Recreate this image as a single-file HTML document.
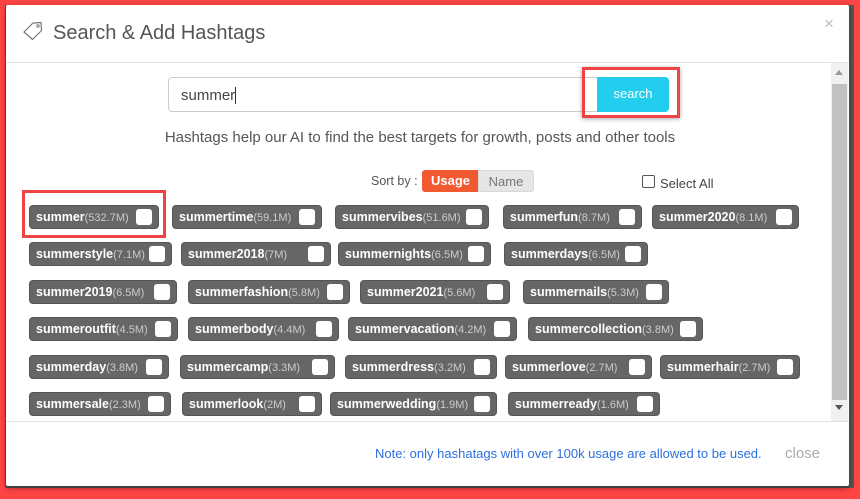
<!DOCTYPE html>
<html><head><meta charset="utf-8"><style>
*{box-sizing:border-box;margin:0;padding:0}
body{width:860px;height:499px;background:#f44;position:relative;overflow:hidden;font-family:"Liberation Sans",Arial,sans-serif}
.dark{position:absolute;left:5px;top:5px;width:849px;height:483px;background:#555}
.modal{position:absolute;left:6px;top:5px;width:843px;height:481px;background:#fff;border-radius:2px;box-shadow:0 2px 6px rgba(0,0,0,.4)}
.title{position:absolute;left:53px;top:22px;font-size:20px;color:#555}
.x{position:absolute;left:824px;top:14px;font-size:17px;color:#bbb}
.hr{position:absolute;left:6px;width:843px;height:1px;background:#e2e2e2}
.input{position:absolute;left:168px;top:77px;width:430px;height:35px;border:1px solid #ccc;border-radius:4px 0 0 4px;font-size:15px;color:#444;padding:9px 12px}
.input span{border-right:1px solid #333}
.btn{position:absolute;left:597px;top:77px;width:72px;height:35px;background:#22cdee;color:#fff;font-size:13px;text-align:center;line-height:34px;border-radius:0 4px 4px 0}
.hl{position:absolute;border:3px solid #ee4444;box-shadow:0 1px 4px rgba(0,0,0,.35)}
.hint{position:absolute;left:0;width:840px;top:129px;text-align:center;font-size:15px;color:#555}
.sort{position:absolute;left:371px;top:174px;font-size:12.5px;color:#555}
.usage{position:absolute;left:422px;top:170px;width:57px;height:22px;background:#f15a30;color:#fff;font-weight:bold;font-size:13px;text-align:center;line-height:22px;border-radius:3px 0 0 3px}
.name{position:absolute;left:478px;top:170px;width:56px;height:22px;background:#e6e6e6;color:#777;font-size:13px;text-align:center;line-height:22px;border:1px solid #d8d8d8;border-radius:0 3px 3px 0}
.sa{position:absolute;left:642px;top:175px;width:13px;height:13px;border:1px solid #555;border-radius:2px}
.sat{position:absolute;left:660px;top:176px;font-size:13px;color:#444}
.chip{position:absolute;height:24px;background:#666;border:1px solid #555;border-radius:4px;color:#fff;font-weight:bold;font-size:12.5px;line-height:22px;padding-left:6px;white-space:nowrap}
.chip i{font-style:normal;font-weight:normal;color:#ccc;font-size:11px}
.chip b{position:absolute;right:6px;top:3px;width:16px;height:16px;background:#fff;border-radius:3px}
.sb{position:absolute;left:831px;top:63px;width:17px;height:358px;background:#f1f1f1}
.thumb{position:absolute;left:832px;top:84px;width:15px;height:316px;background:#c1c1c1}
.note{position:absolute;left:375px;top:446px;font-size:13px;color:#2c6fe0}
.close{position:absolute;left:785px;top:445px;font-size:15px;color:#aaa}
</style></head><body>
<div class="dark"></div>
<div class="modal"></div>
<svg style="position:absolute;left:22px;top:21px" width="22" height="20" viewBox="0 0 22 20"><path d="M2 11 L11 2 L19 1.5 L19.5 9.5 L10.5 18.5 Z" fill="none" stroke="#777" stroke-width="1.2" stroke-linejoin="round"/><circle cx="16" cy="5" r="1.2" fill="none" stroke="#777" stroke-width="1"/></svg>
<div class="title">Search &amp; Add Hashtags</div>
<div class="x">×</div>
<div class="hr" style="top:62px"></div>
<div class="input"><span>summer</span></div>
<div class="btn">search</div>
<div class="hl" style="left:582px;top:67px;width:98px;height:51px"></div>
<div class="hint">Hashtags help our AI to find the best targets for growth, posts and other tools</div>
<div class="sort">Sort by :</div>
<div class="usage">Usage</div><div class="name">Name</div>
<div class="sa"></div><div class="sat">Select All</div>

<div class="chip" style="left:29px;top:205px;width:130px">summer<i>(532.7M)</i><b></b></div>
<div class="chip" style="left:172px;top:205px;width:150px">summertime<i>(59.1M)</i><b></b></div>
<div class="chip" style="left:335px;top:205px;width:154px">summervibes<i>(51.6M)</i><b></b></div>
<div class="chip" style="left:503px;top:205px;width:139px">summerfun<i>(8.7M)</i><b></b></div>
<div class="chip" style="left:652px;top:205px;width:147px">summer2020<i>(8.1M)</i><b></b></div>

<div class="chip" style="left:29px;top:242px;width:143px">summerstyle<i>(7.1M)</i><b></b></div>
<div class="chip" style="left:181px;top:242px;width:150px">summer2018<i>(7M)</i><b></b></div>
<div class="chip" style="left:338px;top:242px;width:153px">summernights<i>(6.5M)</i><b></b></div>
<div class="chip" style="left:504px;top:242px;width:144px">summerdays<i>(6.5M)</i><b></b></div>

<div class="chip" style="left:29px;top:280px;width:148px">summer2019<i>(6.5M)</i><b></b></div>
<div class="chip" style="left:188px;top:280px;width:162px">summerfashion<i>(5.8M)</i><b></b></div>
<div class="chip" style="left:360px;top:280px;width:150px">summer2021<i>(5.6M)</i><b></b></div>
<div class="chip" style="left:523px;top:280px;width:146px">summernails<i>(5.3M)</i><b></b></div>

<div class="chip" style="left:29px;top:317px;width:149px">summeroutfit<i>(4.5M)</i><b></b></div>
<div class="chip" style="left:188px;top:317px;width:151px">summerbody<i>(4.4M)</i><b></b></div>
<div class="chip" style="left:348px;top:317px;width:169px">summervacation<i>(4.2M)</i><b></b></div>
<div class="chip" style="left:528px;top:317px;width:175px">summercollection<i>(3.8M)</i><b></b></div>

<div class="chip" style="left:29px;top:355px;width:140px">summerday<i>(3.8M)</i><b></b></div>
<div class="chip" style="left:180px;top:355px;width:155px">summercamp<i>(3.3M)</i><b></b></div>
<div class="chip" style="left:345px;top:355px;width:152px">summerdress<i>(3.2M)</i><b></b></div>
<div class="chip" style="left:505px;top:355px;width:147px">summerlove<i>(2.7M)</i><b></b></div>
<div class="chip" style="left:660px;top:355px;width:140px">summerhair<i>(2.7M)</i><b></b></div>

<div class="chip" style="left:29px;top:392px;width:142px">summersale<i>(2.3M)</i><b></b></div>
<div class="chip" style="left:182px;top:392px;width:140px">summerlook<i>(2M)</i><b></b></div>
<div class="chip" style="left:330px;top:392px;width:167px">summerwedding<i>(1.9M)</i><b></b></div>
<div class="chip" style="left:508px;top:392px;width:152px">summerready<i>(1.6M)</i><b></b></div>

<div class="hl" style="left:22px;top:190px;width:144px;height:48px;box-shadow:none"></div>

<div class="sb"></div><div class="thumb"></div>
<div style="position:absolute;left:835px;top:70px;width:0;height:0;border-left:4px solid transparent;border-right:4px solid transparent;border-bottom:5px solid #999"></div>
<div style="position:absolute;left:835px;top:405px;width:0;height:0;border-left:4px solid transparent;border-right:4px solid transparent;border-top:5px solid #555"></div>
<div class="hr" style="top:421px"></div>
<div class="note">Note: only hashatags with over 100k usage are allowed to be used.</div>
<div class="close">close</div>
</body></html>
